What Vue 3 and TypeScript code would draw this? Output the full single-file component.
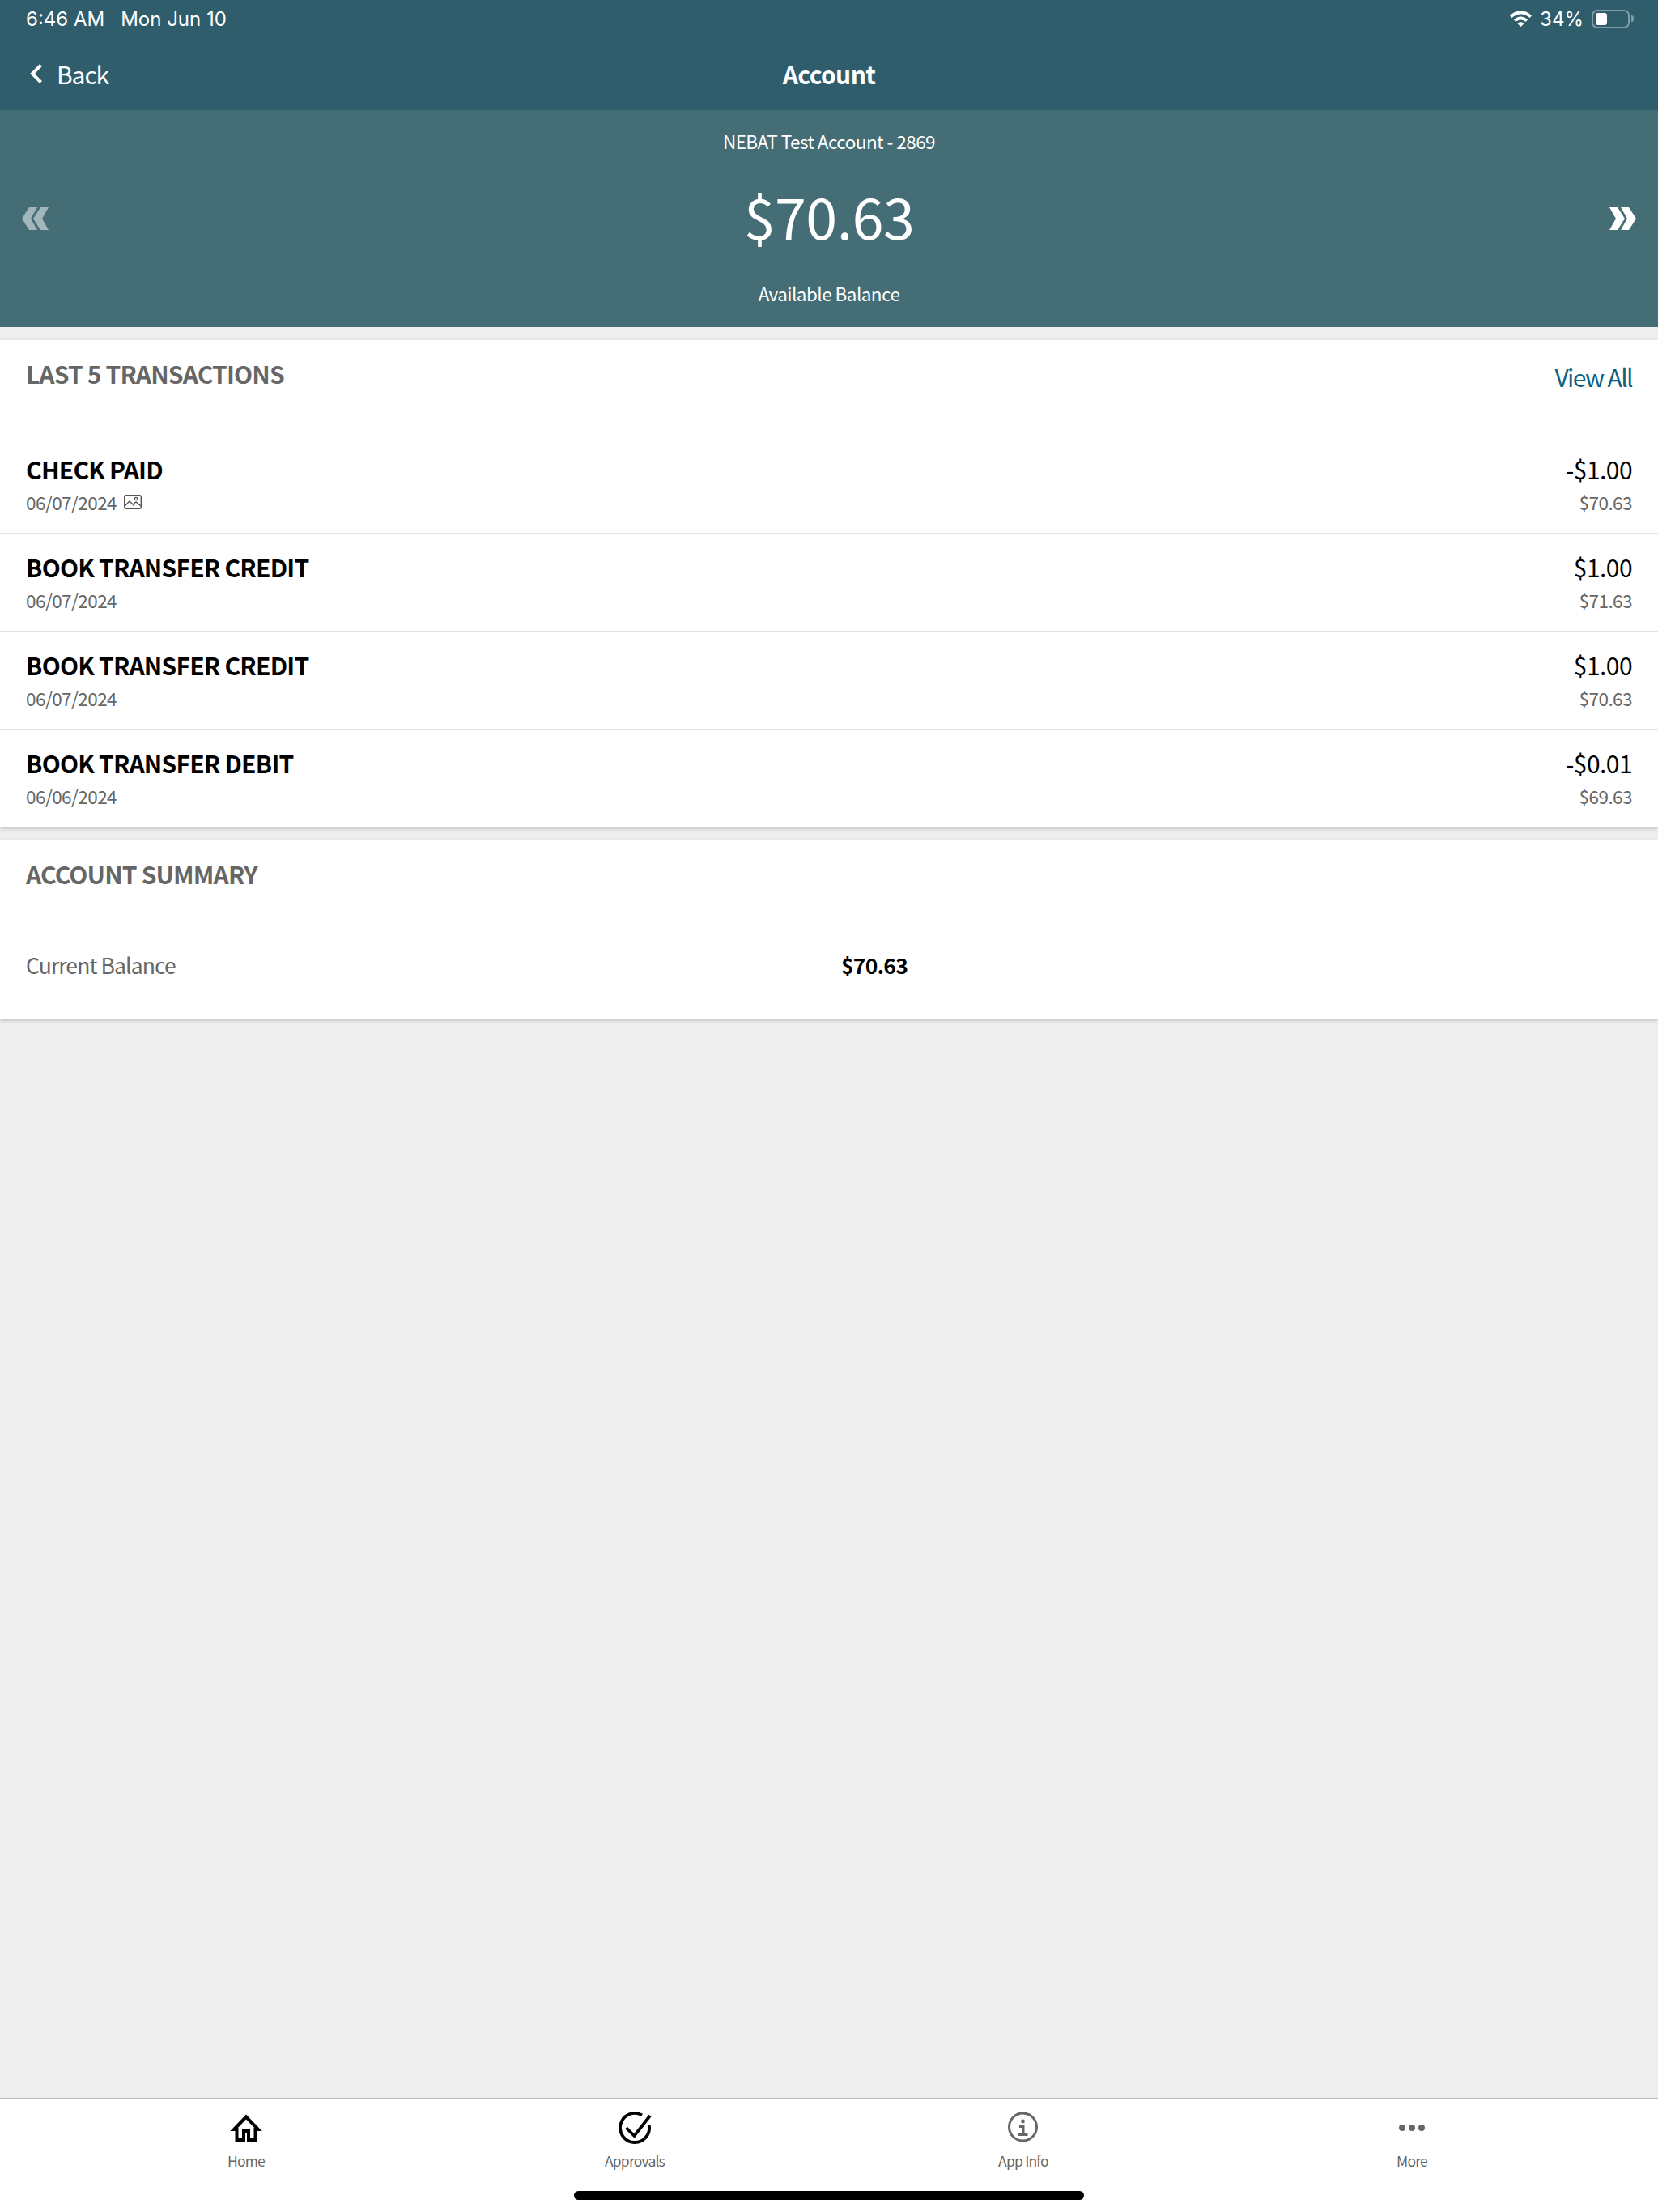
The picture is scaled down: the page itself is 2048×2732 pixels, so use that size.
<script setup lang="ts">
interface Txn {
  name: string
  date: string
  amount: string
  balance: string
  hasImage?: boolean
}

const txns: Txn[] = [
  { name: 'CHECK PAID', date: '06/07/2024', amount: '-$1.00', balance: '$70.63', hasImage: true },
  { name: 'BOOK TRANSFER CREDIT', date: '06/07/2024', amount: '$1.00', balance: '$71.63' },
  { name: 'BOOK TRANSFER CREDIT', date: '06/07/2024', amount: '$1.00', balance: '$70.63' },
  { name: 'BOOK TRANSFER DEBIT', date: '06/06/2024', amount: '-$0.01', balance: '$69.63' }
]
</script>

<template>
  <div class="page">
    <header class="header">
      <div class="status">
        <div class="status-left">
          <span>6:46 AM</span>
          <span>Mon Jun 10</span>
        </div>
        <div class="status-right">
          <svg class="wifi" viewBox="0 0 27 20" width="27" height="20">
            <path d="M0 6.500C7.500-1.800 19.500-1.800 27 6.500l-2.400 2.600C18.500 2.800 8.500 2.800 2.400 9.100z" fill="#fff" />
            <path d="M5 11.400c4.800-5.100 12.200-5.100 17 0l-2.400 2.600c-3.500-3.500-8.700-3.500-12.200 0z" fill="#fff" />
            <path d="M9.300 15.900c2.400-2.300 6-2.300 8.400 0L13.500 20z" fill="#fff" />
          </svg>
          <span>34%</span>
          <div class="battery"><div class="battery-fill"></div></div>
          <div class="battery-nub"></div>
        </div>
      </div>
      <div class="nav">
        <div class="back">
          <svg viewBox="0 0 17 26" width="17" height="26">
            <path d="M14.500 2.500L4 13l10.500 10.500" fill="none" stroke="#fff" stroke-width="4" />
          </svg>
          <span>Back</span>
        </div>
        <div class="nav-title">Account</div>
      </div>
    </header>

    <section class="hero">
      <svg class="arrow arrow-off" viewBox="0 0 33 28" width="33" height="28">
        <path d="M9 0h10l-8 14 8 14H9L0 14zM23 0h10l-8 14 8 14H23l-9-14z" fill="#fff" />
      </svg>
      <div class="hero-main">
        <div class="hero-account">NEBAT Test Account - 2869</div>
        <div class="hero-amount">$70.63</div>
        <div class="hero-label">Available Balance</div>
      </div>
      <svg class="arrow" viewBox="0 0 33 28" width="33" height="28">
        <path d="M24 0H14l8 14-8 14h10l9-14zM10 0H0l8 14-8 14h10l9-14z" fill="#fff" />
      </svg>
    </section>

    <section class="card txn-card">
      <div class="card-head">
        <h2>LAST 5 TRANSACTIONS</h2>
        <span class="view-all">View All</span>
      </div>
      <div v-for="(t, i) in txns" :key="i" class="txn" :class="{ 'txn-first': i === 0 }">
        <div>
          <div class="txn-name">{{ t.name }}</div>
          <div class="txn-date">
            <span>{{ t.date }}</span>
            <svg v-if="t.hasImage" viewBox="0 0 22 18" width="22" height="18">
              <rect x="0.700" y="0.700" width="20.600" height="16.600" rx="2" fill="none" stroke="#555" stroke-width="1.400" />
              <path d="M1 14l6-6 6 6M11 12l4-3 6 5" fill="none" stroke="#555" stroke-width="1.400" />
              <circle cx="15" cy="5" r="1.700" fill="none" stroke="#555" stroke-width="1.300" />
            </svg>
          </div>
        </div>
        <div class="txn-right">
          <div class="txn-amount">{{ t.amount }}</div>
          <div class="txn-balance">{{ t.balance }}</div>
        </div>
      </div>
    </section>

    <section class="card summary-card">
      <div class="card-head">
        <h2>ACCOUNT SUMMARY</h2>
      </div>
      <div class="summary-row">
        <span class="summary-label">Current Balance</span>
        <span class="summary-value">$70.63</span>
      </div>
    </section>

    <div class="spacer"></div>

    <nav class="tabs">
      <div class="tab">
        <svg viewBox="0 0 40 40" width="40" height="40">
          <path d="M20 6.500L5 22h3.500v13H17V24h6v11h8.500V22H35z" fill="none" stroke="#000" stroke-width="4" />
        </svg>
        <span>Home</span>
      </div>
      <div class="tab">
        <svg viewBox="0 0 41 40" width="41" height="40">
          <path d="M29 4.400A18 18 0 1 0 37.700 16.500" fill="none" stroke="#000" stroke-width="3.800" />
          <path d="M9.500 20l10 10L39 5" fill="none" stroke="#000" stroke-width="3.800" />
        </svg>
        <span>Approvals</span>
      </div>
      <div class="tab">
        <svg viewBox="0 0 40 40" width="40" height="40">
          <circle cx="19.500" cy="19" r="17" fill="none" stroke="#666" stroke-width="3" />
          <circle cx="19.500" cy="12" r="2.400" fill="#666" />
          <path d="M15 18.500h5v10M13.500 28.500h12" fill="none" stroke="#666" stroke-width="3" />
        </svg>
        <span>App Info</span>
      </div>
      <div class="tab">
        <svg viewBox="0 0 40 40" width="40" height="40">
          <circle cx="8" cy="20" r="4" fill="#666" />
          <circle cx="20" cy="20" r="4" fill="#666" />
          <circle cx="32" cy="20" r="4" fill="#666" />
        </svg>
        <span>More</span>
      </div>
      <div class="home-bar"></div>
    </nav>
  </div>
</template>

<style>
body {
  margin: 0;
  background: #eeeeee;
}
</style>

<style scoped>
.page {
  width: 2048px;
  height: 2732px;
  display: flex;
  flex-direction: column;
  background: #eeeeee;
  font-family: "Noto Sans CJK SC", "Noto Sans", sans-serif;
  overflow: hidden;
}

.header {
  height: 136px;
  box-sizing: border-box;
  background: #2f5d6b;
  color: #fff;
  padding: 0 32px;
}

.status {
  height: 46px;
  display: flex;
  justify-content: space-between;
  align-items: center;
  font-family: "Inter", sans-serif;
  font-size: 24px;
}

.status-left {
  display: flex;
  gap: 20px;
}

.status-right {
  display: flex;
  align-items: center;
  margin-right: -2px;
}

.wifi {
  margin-right: 10px;
}

.battery {
  width: 47px;
  height: 23px;
  box-sizing: border-box;
  margin-left: 10px;
  padding: 2px 3px;
  border: 2px solid #7f9da6;
  border-radius: 7px;
}

.battery-fill {
  width: 14px;
  height: 100%;
  background: #fff;
  border-radius: 3px;
}

.battery-nub {
  width: 3px;
  height: 8px;
  margin-left: 2px;
  background: #7f9da6;
  border-radius: 0 3px 3px 0;
}

.nav {
  position: relative;
  height: 90px;
  display: flex;
  align-items: center;
}

.back {
  display: flex;
  align-items: center;
  gap: 17px;
  margin-left: 4px;
  font-size: 30px;
  letter-spacing: -1.100px;
}

.nav-title {
  position: absolute;
  left: 0;
  right: 0;
  text-align: center;
  font-size: 30px;
  font-weight: 700;
  letter-spacing: -0.600px;
}

.hero {
  height: 268px;
  flex: none;
  display: flex;
  align-items: center;
  justify-content: space-between;
  padding: 0 27px;
  box-sizing: border-box;
  background: #456d76;
  color: #fff;
}

.arrow-off {
  opacity: 0.5;
}

.hero-main {
  display: flex;
  flex-direction: column;
  align-items: center;
  margin-top: -4px;
}

.hero-account,
.hero-label {
  font-size: 22.500px;
  line-height: 38px;
  letter-spacing: -0.550px;
}

.hero-amount {
  margin: 17px 0 21px;
  font-size: 70px;
  line-height: 112px;
  font-weight: 400;
  letter-spacing: -0.500px;
}

.card {
  flex: none;
  background: #fff;
  box-shadow: 0 2px 5px rgba(0, 0, 0, 0.22);
}

.txn-card {
  margin-top: 16px;
}

.summary-card {
  margin-top: 17px;
}

.card-head {
  display: flex;
  justify-content: space-between;
  padding: 0 32px;
  height: 117px;
  box-sizing: border-box;
}

.card-head h2 {
  margin: 17px 0 0;
  font-size: 30px;
  line-height: 48px;
  font-weight: 700;
  letter-spacing: -0.850px;
  color: #666;
}

.view-all {
  margin-top: 21px;
  font-size: 30px;
  line-height: 48px;
  letter-spacing: -1.600px;
  color: #0f5f80;
}

.txn {
  display: flex;
  justify-content: space-between;
  height: 121px;
  box-sizing: border-box;
  padding: 0 32px;
  border-top: 2px solid #e2e2e2;
}

.txn-first {
  border-top: 0;
  padding-top: 2px;
}

.txn-name {
  margin-top: 16px;
  font-size: 30px;
  line-height: 48px;
  font-weight: 700;
  letter-spacing: -0.800px;
  color: #000;
}

.txn-date {
  display: flex;
  align-items: center;
  gap: 9px;
  font-size: 22.500px;
  line-height: 34px;
  letter-spacing: -0.550px;
  color: #666;
}

.txn-right {
  text-align: right;
}

.txn-amount {
  margin-top: 16px;
  font-size: 30px;
  line-height: 48px;
  letter-spacing: -0.550px;
  color: #000;
}

.txn-balance {
  font-size: 22.500px;
  line-height: 34px;
  letter-spacing: -0.550px;
  color: #666;
}

.summary-row {
  display: grid;
  grid-template-columns: 1007px 1fr;
  align-items: center;
  height: 103px;
  box-sizing: border-box;
  padding: 0 32px 30px;
  font-size: 26.500px;
}

.summary-label {
  letter-spacing: -0.900px;
  color: #666;
}

.summary-value {
  font-weight: 700;
  letter-spacing: -0.800px;
  color: #000;
}

.spacer {
  flex: 1;
}

.tabs {
  position: relative;
  height: 141px;
  flex: none;
  box-sizing: border-box;
  padding: 15px 64px 0;
  display: grid;
  grid-template-columns: repeat(4, 1fr);
  background: #fff;
  border-top: 2px solid #bbbbbb;
}

.tab {
  display: flex;
  flex-direction: column;
  align-items: center;
  height: 80px;
  font-size: 17.500px;
  line-height: 30px;
  letter-spacing: -0.800px;
  color: #666;
}

.tab svg {
  margin-bottom: 6px;
}

.home-bar {
  position: absolute;
  left: 709px;
  bottom: 15px;
  width: 630px;
  height: 11px;
  background: #000;
  border-radius: 6px;
}
</style>
